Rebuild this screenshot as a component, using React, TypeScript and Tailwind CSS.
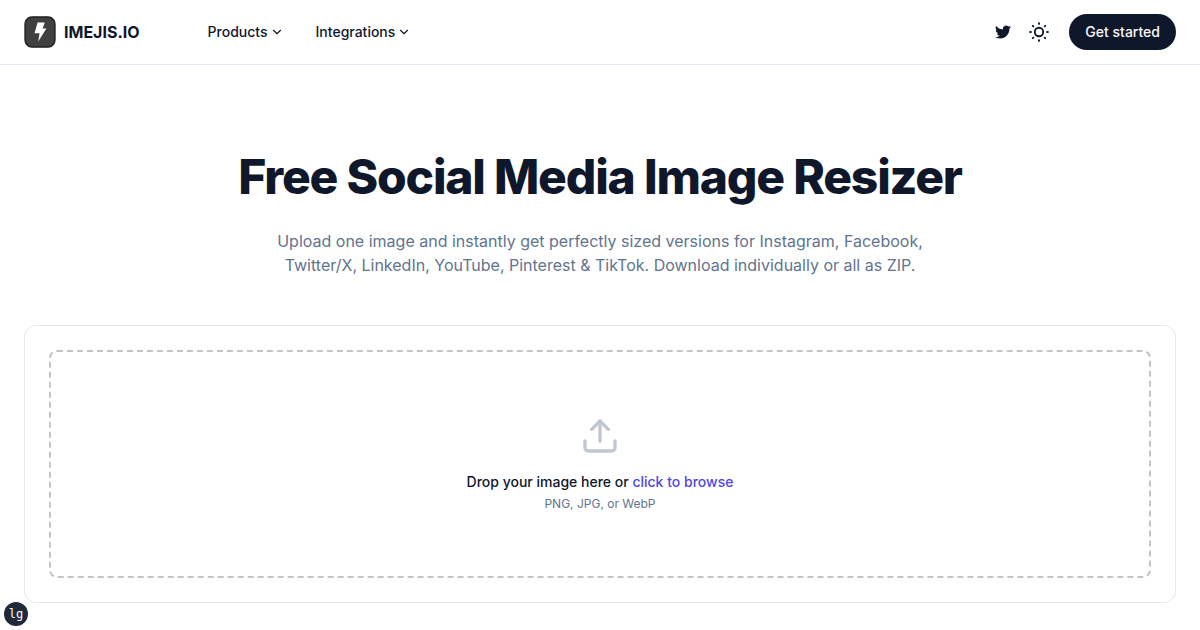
import { useState } from "react";
import type { ReactNode } from "react";
import { ChevronDown, Upload } from "lucide-react";

const NAV_ITEMS = ["Products", "Integrations"];

function Logo() {
  return (
    <a href="#" className="flex items-center gap-2">
      <svg className="h-8 w-8" viewBox="0 0 32 32" aria-hidden="true">
        <rect x="1" y="1" width="30" height="30" rx="7" fill="#404040" stroke="#1c1c1c" strokeWidth="1.3" />
        <path d="M13.6 6.6h7.2l-2.2 6h3.8L14.2 25.4l1.3-8.2h-5z" fill="#fff" />
      </svg>
      <span className="font-bold">IMEJIS.IO</span>
    </a>
  );
}

function TwitterIcon() {
  return (
    <svg className="h-4 w-4" viewBox="0 0 24 24" fill="currentColor" aria-hidden="true">
      <path d="M23.953 4.57a10 10 0 01-2.825.775 4.958 4.958 0 002.163-2.723c-.951.555-2.005.959-3.127 1.184a4.92 4.92 0 00-8.384 4.482C7.69 8.095 4.067 6.13 1.64 3.162a4.822 4.822 0 00-.666 2.475c0 1.71.87 3.213 2.188 4.096a4.904 4.904 0 01-2.228-.616v.06a4.923 4.923 0 003.946 4.827 4.996 4.996 0 01-2.212.085 4.936 4.936 0 004.604 3.417 9.867 9.867 0 01-6.102 2.105c-.39 0-.779-.023-1.17-.067a13.995 13.995 0 007.557 2.209c9.053 0 13.998-7.496 13.998-13.985 0-.21 0-.42-.015-.63A9.935 9.935 0 0024 4.59z" />
    </svg>
  );
}

function SunIcon() {
  return (
    <svg
      className="h-5 w-5"
      viewBox="0 0 20 20"
      fill="none"
      stroke="currentColor"
      strokeWidth="1.9"
      strokeLinecap="round"
      aria-hidden="true"
    >
      <circle cx="10" cy="10" r="4.2" />
      <path d="M10 1.1v.8M10 18.1v.8M1.1 10h.8M18.1 10h.8M3.8 3.8l.5.5M15.7 15.7l.5.5M3.8 16.2l.5-.5M15.7 4.3l.5-.5" />
    </svg>
  );
}

function IconButton({ label, children }: { label: string; children: ReactNode }) {
  return (
    <button type="button" aria-label={label} className="flex h-9 w-9 items-center justify-center">
      {children}
    </button>
  );
}

function Header() {
  return (
    <header className="border-b border-slate-200">
      <div className="flex h-16 items-center justify-between px-6">
        <div className="flex items-center gap-13">
          <Logo />
          <nav className="flex items-center">
            {NAV_ITEMS.map((item) => (
              <button
                key={item}
                type="button"
                className="flex h-9 items-center gap-0.5 px-4 text-sm font-medium"
              >
                {item}
                <ChevronDown className="h-3.5 w-3.5" />
              </button>
            ))}
          </nav>
        </div>
        <div className="flex items-center">
          <a href="#" aria-label="Twitter" className="flex h-9 w-9 items-center justify-center">
            <TwitterIcon />
          </a>
          <IconButton label="Toggle theme">
            <SunIcon />
          </IconButton>
          <button
            type="button"
            className="ml-3 h-9 rounded-full bg-slate-900 px-4 text-sm font-medium text-slate-50"
          >
            Get started
          </button>
        </div>
      </div>
    </header>
  );
}

function UploadCard() {
  const [fileName, setFileName] = useState("");

  return (
    <section className="rounded-xl border border-slate-200 p-6">
      <label
        htmlFor="image-file"
        className="flex cursor-pointer flex-col items-center rounded-lg border-2 border-dashed border-[#c4c4c8] py-16 text-center"
      >
        <Upload className="mb-4 h-10 w-10 text-[#c0c6d0]" />
        <span className="text-sm font-medium">
          Drop your image here or <span className="text-[#4f46e5]">click to browse</span>
        </span>
        <span className="mt-1 text-xs text-slate-500">{fileName || "PNG, JPG, or WebP"}</span>
        <input
          id="image-file"
          type="file"
          accept="image/png,image/jpeg,image/webp"
          className="sr-only"
          onChange={(e) => setFileName(e.target.files?.[0]?.name ?? "")}
        />
      </label>
    </section>
  );
}

export default function App() {
  return (
    <div className="min-h-screen bg-white font-['Inter',sans-serif] text-slate-900 antialiased">
      <Header />
      <main className="px-6 pt-20">
        <div className="mx-auto mb-12 max-w-3xl text-center">
          <h1 className="text-5xl leading-16 font-extrabold tracking-tight">
            Free Social Media Image Resizer
          </h1>
          <p className="mx-auto mt-5 max-w-2xl text-base text-slate-500">
            Upload one image and instantly get perfectly sized versions for Instagram, Facebook,
            Twitter/X, LinkedIn, YouTube, Pinterest &amp; TikTok. Download individually or all as ZIP.
          </p>
        </div>
        <UploadCard />
      </main>
      {/* current breakpoint */}
      <div className="fixed bottom-1 left-1 flex h-6 w-6 items-center justify-center rounded-full bg-gray-800 font-['DejaVu_Sans_Mono',monospace] text-xs text-white">
        lg
      </div>
    </div>
  );
}
